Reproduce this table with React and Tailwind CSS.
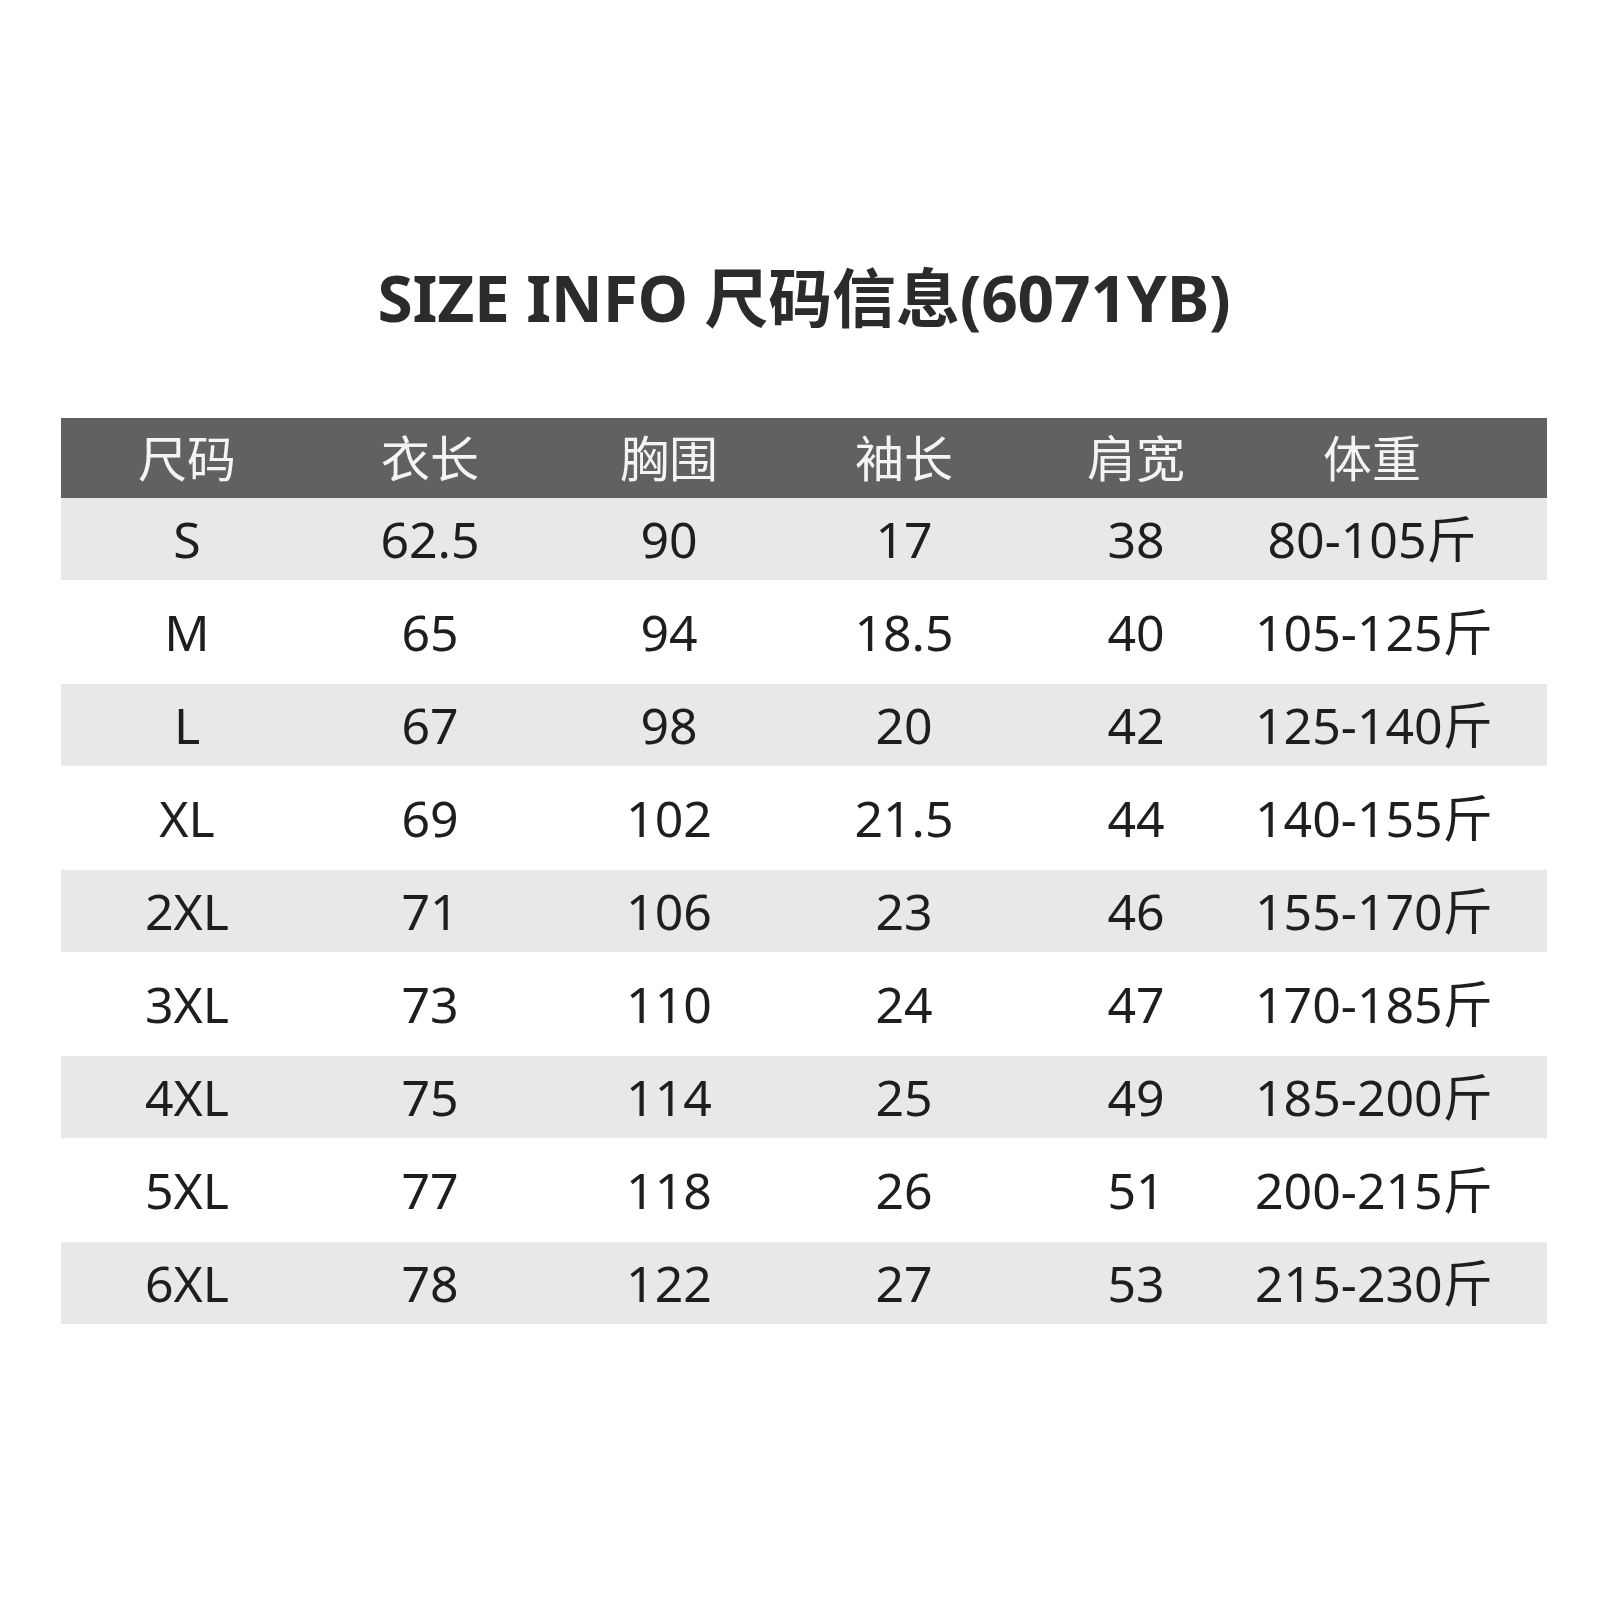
import React from "react";

const rows = [
  ["S", "62.5", "90", "17", "38", "80-105斤"],
  ["M", "65", "94", "18.5", "40", "105-125斤"],
  ["L", "67", "98", "20", "42", "125-140斤"],
  ["XL", "69", "102", "21.5", "44", "140-155斤"],
  ["2XL", "71", "106", "23", "46", "155-170斤"],
  ["3XL", "73", "110", "24", "47", "170-185斤"],
  ["4XL", "75", "114", "25", "49", "185-200斤"],
  ["5XL", "77", "118", "26", "51", "200-215斤"],
  ["6XL", "78", "122", "27", "53", "215-230斤"],
];

const headers = ["尺码", "衣长", "胸围", "袖长", "肩宽", "体重"];

const font = { fontFamily: '"Noto Sans", "Noto Sans CJK SC", sans-serif' };

const gridCols = "grid grid-cols-[252px_234px_244px_226px_238px_292px]";

const App = () => {
  return (
    <div className="w-[1600px] h-[1600px] bg-white" style={font}>
      <div className="pt-[266px] ml-[61px] w-[1486px]">

        <h1 className="text-center text-[64px] font-bold leading-none tracking-[-0.2px] text-[#2b2b2b] whitespace-nowrap">
          SIZE INFO 尺码信息(6071YB)
        </h1>

        <div className="mt-[88px]">

          {/* HEADER */}
          <div className={gridCols + " h-[80px] bg-[#616161] text-[#f4f4f4] text-[49px] items-center"}>
            {headers.map((h, i) => (
              <div key={h} className={i === 5 ? "text-center pr-[58px] leading-none" : "text-center leading-none"}>
                {h}
              </div>
            ))}
          </div>

          {/* ROWS */}
          {rows.map((r, ri) => (
            <div
              key={r[0]}
              className={
                gridCols +
                " items-center text-[50px] text-[#1e1e1e] " +
                (ri % 2 === 0 ? "h-[82px] bg-[#e8e8e8]" : "h-[104px] bg-white")
              }
            >
              {r.map((c, ci) => (
                <div
                  key={ci}
                  className={
                    ci === 5
                      ? "text-center pr-[58px] leading-none whitespace-nowrap"
                      : "text-center leading-none whitespace-nowrap"
                  }
                >
                  {c}
                </div>
              ))}
            </div>
          ))}

        </div>
      </div>
    </div>
  );
};

export default App;
